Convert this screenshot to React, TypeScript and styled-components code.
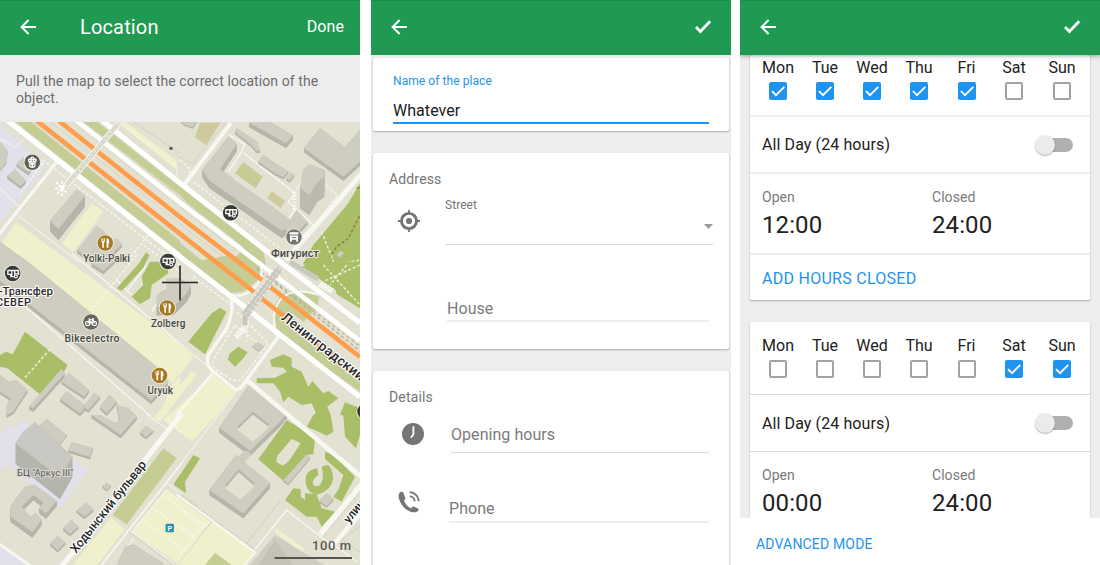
import React from 'react';
import styled, { createGlobalStyle } from 'styled-components';

const GlobalStyle = createGlobalStyle`
  * { box-sizing: border-box; }
  body {
    margin: 0;
    background: #fff;
    font-family: Roboto, "Noto Sans", sans-serif;
    color: #212121;
  }
`;

const Page = styled.div`
  display: flex;
  width: 1100px;
  height: 565px;
  overflow: hidden;
`;

const Screen = styled.section<{ $gap?: number }>`
  display: flex;
  flex-direction: column;
  flex: 0 0 360px;
  height: 565px;
  margin-left: ${(p) => p.$gap ?? 0}px;
  background: #ededed;
  overflow: hidden;
`;

const AppBar = styled.header<{ $raised?: boolean; $right?: number }>`
  display: flex;
  align-items: center;
  flex: 0 0 55px;
  padding: 0 ${(p) => p.$right ?? 19}px 2px 20px;
  background: #209952;
  border-top: 1px solid #1c8c49;
  color: #fff;
  z-index: 1;
  box-shadow: ${(p) => (p.$raised ? '0 1px 4px rgba(0, 0, 0, 0.35)' : 'none')};
`;

const Title = styled.h1`
  flex: 1;
  margin: 0 0 0 44px;
  font-size: 20px;
  font-weight: 400;
  line-height: 24px;
  letter-spacing: 0.15px;
`;

const Done = styled.span`
  font-size: 16px;
  line-height: 20px;
  letter-spacing: 0.1px;
`;

const Spacer = styled.div`
  flex: 1;
`;

const Hint = styled.p`
  flex: 0 0 67px;
  margin: 0;
  padding: 18px 16px 0;
  font-size: 14px;
  line-height: 16.5px;
  letter-spacing: 0.08px;
  color: #6e6e6e;
`;

const MapView = styled.svg`
  display: block;
  flex: 0 0 443px;
  width: 360px;
`;

const FormBody = styled.div`
  display: flex;
  flex-direction: column;
  gap: 22px;
  padding: 3px 2px 0;
`;

const Card = styled.div<{ $h: number; $shift?: number }>`
  flex: 0 0 ${(p) => p.$h}px;
  margin-top: ${(p) => p.$shift ?? 0}px;
  background: #fff;
  border-radius: 2px;
  box-shadow: 0 1px 2px rgba(0, 0, 0, 0.28);
`;

const NameField = styled.label`
  display: flex;
  flex-direction: column;
  margin: 0 20px;
  padding-top: 15px;
  height: 66px;
  border-bottom: 2px solid #1e93ef;
`;

const NameCaption = styled.span`
  font-size: 12px;
  line-height: 16px;
  letter-spacing: 0.07px;
  color: #1e93ef;
`;

const NameValue = styled.span`
  margin-top: 12px;
  font-size: 16px;
  line-height: 20px;
  letter-spacing: 0.05px;
`;

const SectionTitle = styled.h2`
  margin: 0;
  padding: 18px 16px 0;
  font-size: 14px;
  font-weight: 400;
  line-height: 16px;
  letter-spacing: 0.15px;
  color: #757575;
`;

const FieldRow = styled.div<{ $h: number; $right?: number }>`
  display: flex;
  align-items: flex-start;
  height: ${(p) => p.$h}px;
  padding-right: ${(p) => p.$right ?? 20}px;
`;

const IconSlot = styled.div<{ $w: number; $left: number; $top: number }>`
  flex: 0 0 ${(p) => p.$w}px;
  padding: ${(p) => p.$top}px 0 0 ${(p) => p.$left}px;
  svg { display: block; }
`;

const Field = styled.div<{ $thick?: boolean; $top: number }>`
  flex: 1;
  height: 100%;
  padding-top: ${(p) => p.$top}px;
  border-bottom: ${(p) => (p.$thick ? '2px solid #eeeeee' : '1px solid #d9d9d9')};
  font-size: 16px;
  line-height: 20px;
  letter-spacing: 0.05px;
  color: #7b7b7b;
`;

const SelectCaption = styled.div`
  font-size: 12px;
  line-height: 16px;
  color: #757575;
`;

const SelectArrow = styled.div`
  display: flex;
  justify-content: flex-end;
  padding-top: 11px;
  svg { display: block; }
`;

const HoursBody = styled.div`
  display: flex;
  flex-direction: column;
  flex: 0 0 463px;
  gap: 22px;
  padding: 0 10px;
  overflow: hidden;
`;

const Days = styled.div<{ $h: number }>`
  display: grid;
  grid-template-columns: 47px 47px 47px 47px 48px 47px 49px;
  height: ${(p) => p.$h}px;
  padding: 14px 0 0 4.5px;
`;

const Day = styled.div`
  display: flex;
  flex-direction: column;
  align-items: center;
  gap: 4px;
  font-size: 16px;
  line-height: 20px;
`;

const Box = styled.span<{ $on: boolean }>`
  display: flex;
  width: 18px;
  height: 18px;
  border-radius: 2px;
  border: ${(p) => (p.$on ? 'none' : '2px solid #a2a2a2')};
  background: ${(p) => (p.$on ? '#1e93ef' : '#fff')};
`;

const Rule = styled.div<{ $thick?: boolean }>`
  height: ${(p) => (p.$thick ? 2 : 1)}px;
  background: ${(p) => (p.$thick ? '#eeeeee' : '#dadada')};
`;

const AllDay = styled.div<{ $h: number }>`
  display: flex;
  align-items: center;
  justify-content: space-between;
  height: ${(p) => p.$h}px;
  padding: 0 17px 0 12px;
  font-size: 16px;
  letter-spacing: 0.1px;
`;

const Track = styled.span`
  display: flex;
  align-items: center;
  width: 34px;
  height: 14px;
  background: linear-gradient(to right, transparent 8px, #b0b0b0 8px);
  border-radius: 7px;
`;

const Thumb = styled.span`
  flex: 0 0 20px;
  height: 20px;
  margin-left: -4px;
  border-radius: 50%;
  background: #ebebeb;
  box-shadow: 0 1px 1.5px rgba(0, 0, 0, 0.3);
`;

const Times = styled.div`
  display: grid;
  grid-template-columns: 170px 170px;
  height: 79px;
  padding: 14px 0 0 12px;
`;

const TimeLabel = styled.div`
  font-size: 14px;
  line-height: 18px;
  letter-spacing: 0.05px;
  color: #7a7a7a;
`;

const TimeValue = styled.div`
  margin-top: 5px;
  font-size: 24px;
  line-height: 28px;
  letter-spacing: 0.1px;
`;

const AddHours = styled.div`
  height: 45px;
  padding-left: 12px;
  font-size: 16px;
  line-height: 47px;
  letter-spacing: 0.27px;
  color: #1e93ef;
`;

const Footer = styled.footer`
  flex: 1;
  padding-left: 16px;
  background: #fff;
  font-size: 14px;
  line-height: 53px;
  letter-spacing: 0.17px;
  color: #1e93ef;
`;

const BackIcon = () => (
  <svg width="16" height="16" viewBox="0 0 16 16" fill="none" stroke="#fff" strokeWidth="2">
    <path d="M16 8H1.6M8.6 1L1.6 8l7 7" />
  </svg>
);

const DoneIcon = () => (
  <svg width="18" height="16" viewBox="0 0 18 16" fill="none" stroke="#fff" strokeWidth="2.8">
    <path d="M2 8l4.400 4.400L16.200 2.200" />
  </svg>
);

const TargetIcon = () => (
  <svg width="22" height="22" viewBox="0 0 22 22" fill="none" stroke="#757575">
    <circle cx="11" cy="11" r="7.6" strokeWidth="2.900" />
    <circle cx="11" cy="11" r="3.100" fill="#757575" stroke="none" />
    <path d="M11 0v3M11 19v3M0 11h3M19 11h3" strokeWidth="1.800" />
  </svg>
);

const ClockIcon = () => (
  <svg width="22" height="22" viewBox="0 0 22 22">
    <circle cx="11" cy="11" r="11" fill="#757575" />
    <path d="M11.400 3.300v8.200l-2.600 3.200" fill="none" stroke="#fff" strokeWidth="1.800" />
  </svg>
);

const PhoneIcon = () => (
  <svg width="22" height="22" viewBox="0 0 22 22" fill="none" stroke="#757575">
    <path
      d="M2.400 1.100C0.800 2.300 0.100 4.800 0.900 7.500c2 6.800 6 11.200 12.400 13.400 2.600.8 5.600.6 7.200-1.700.5-.7.4-1.100-.2-1.500l-4.700-2.200c-.6-.2-.9-.1-1.300.4l-1.200 1.500C9.700 15.700 7.300 13 6 9.700L7 8.300c.4-.5.5-.8.3-1.400L5.300 1.600C4.900.7 3.700.2 2.400 1.100z"
      fill="#757575"
      stroke="none"
    />
    <path d="M11.700 1.200a9 9 0 0 1 9 9" strokeWidth="1.900" />
    <path d="M11.700 5.400a5 5 0 0 1 4.900 4.900" strokeWidth="1.900" />
  </svg>
);

const TickIcon = () => (
  <svg width="18" height="18" viewBox="0 0 18 18" fill="none" stroke="#fff" strokeWidth="1.900">
    <path d="M3 9.200l4 4L15.300 4.800" />
  </svg>
);

type P = [number, number];
const parse = (s: string): P[] => s.split(' ').map((p) => p.split(',').map(Number) as P);
const shifted = (s: string, dy: number) => parse(s).map(([x, y]) => `${x},${y + dy}`).join(' ');

/* Extruded footprint: one wall per edge under a flat roof, with optional courtyard. */
const Building = ({ pts, h = 8, roof = '#cecdc0', wall = '#b6b5a9', hole }: {
  pts: string; h?: number; roof?: string; wall?: string; hole?: string;
}) => {
  const list = parse(pts);
  return (
    <g>
      <polygon points={shifted(pts, h)} fill={wall} />
      {list.map(([x, y], i) => {
        const [u, v] = list[(i + 1) % list.length];
        return <polygon key={i} points={`${x},${y} ${u},${v} ${u},${v + h} ${x},${y + h}`} fill={wall} />;
      })}
      <polygon points={pts} fill={roof} />
      {hole && <polygon points={hole} fill={wall} />}
      {hole && <polygon points={shifted(hole, h * 0.5 + 1)} fill="#e3e1d2" />}
    </g>
  );
};

const Area = ({ pts, c = '#a9be66' }: { pts: string; c?: string }) => <polygon points={pts} fill={c} />;
const Way = ({ d, w = 5, c = '#f8f8f3', dash }: { d: string; w?: number; c?: string; dash?: string }) => (
  <path d={d} fill="none" stroke={c} strokeWidth={w} strokeDasharray={dash} strokeLinejoin="round" />
);

/* A map tile is drawn in thirds of a pixel from its own corner. */
const Tile = ({ x, y, children }: { x: number; y: number; children: React.ReactNode }) => (
  <g transform={`translate(${x} ${y}) scale(0.33333)`}>{children}</g>
);

const YELLOW = '#f1f0cc';
const PALE = '#c5cd94';
const LILAC = '#e2e0ea';
const ORANGE = '#ff9d4a';

const Label = ({ x, y, len, size = 10.5, halo = '#e9e8dc', color = '#474744', rotate, weight = 500, children }: {
  x: number; y: number; len?: number; size?: number; halo?: string; color?: string; rotate?: number; weight?: number; children: string;
}) => (
  <text
    x={x}
    y={y}
    textLength={len}
    fontSize={size}
    fontWeight={weight}
    fill={color}
    stroke={halo}
    strokeWidth={2.2}
    strokeLinejoin="round"
    paintOrder="stroke"
    transform={rotate ? `rotate(${rotate} ${x} ${y})` : undefined}
  >
    {children}
  </text>
);

const Pin = ({ x, y, c, children }: { x: number; y: number; c: string; children?: React.ReactNode }) => (
  <g transform={`translate(${x} ${y})`}>
    <circle r="8.600" fill="#f6f5ee" />
    <circle r="7.800" fill={c} />
    {children}
  </g>
);

const Cutlery = () => (
  <g fill="#fff">
    <path d="M-4-4.800h.8v3h.6v-3h.8v3h.6v-3h.8v3.400l-1 1.400v4.800h-1.600v-4.800l-1-1.400z" />
    <path d="M1.300-4.800c1.900 0 2.600 1.500 2.600 4v1.300h-.8v4.300H1.300z" />
  </g>
);

const Bus = () => (
  <g>
    <path d="M-4.500-3.800H5.200q1.300 0 1.300 1.300V1.500H5.500a2.600 2.600 0 0 0-4.500 2.300H-2.500V1.500H-5.500V-2.800q0-1 1-1z" fill="#fff" />
    <path d="M-4.200-2.200h2.700v2.400h-2.700zM-.3-2.200h1.700v4.800h-1.700zM2.700-2.200h2.300v2h-2.300z" fill="#383a36" />
    <circle cx="3.200" cy="2.900" r="1.500" fill="#383a36" stroke="#fff" strokeWidth="1.100" />
  </g>
);

const CityMap = () => (
  <MapView viewBox="0 122 360 443" width="360" height="443">
    <rect y="122" width="360" height="443" fill="#e3e1d2" />

    <Tile x={0} y={120}>
      <Area c={LILAC} pts="0,10 25,40 135,128 130,150 0,310" />
      <Building h={4} pts="0,65 23,92 19,128 0,150" />
      <Building pts="22,168 45,148 78,182 62,198" />
      <Building pts="50,132 68,112 100,138 85,158" />
      <Area c={PALE} pts="45,5 92,5 540,362 540,398 480,350" />
      <Area c={PALE} pts="250,5 290,5 540,200 540,225" />
      <Way w={2} c="#c4c2ac" dash="3 3" d="M150 5L540 310M214 5L540 262M100 5L540 352" />
      <Way w={2} c="#b8c096" dash="3 3" d="M248 5L540 228M292 5L540 196" />
      <Way w={3} d="M0 205L64 268M52 285L240 428M0 55L45 82L70 60" />
      <Way w={10} c="#f6f6f3" d="M172 124L-5 345" />
      <Way w={4} dash="9 6" d="M128 120L540 436M130 128L60 220" />
      <Area c={YELLOW} pts="355,8 380,8 530,122 530,150" />
      <Way w={2} d="M365 14L530 138V185" />
      <Way w={2} c="#b1b09f" dash="3 3" d="M405 8L540 100" />
      <circle cx="513" cy="85" r="5" fill="#555" />
      <Building h={32} pts="150,302 230,208 255,228 175,328" />
      <Area c={YELLOW} pts="275,250 310,275 220,395 185,372" />
      <Building h={10} pts="290,318 340,358 352,356 365,372 300,440 232,390" />
      <Way w={4} dash="9 6" d="M445 345L385 420M430 375L540 455" />
    </Tile>

    <Area c={YELLOW} pts="16,222 180,344 193,357 180,374 172,382 32,265 2,243" />
    <Building h={4} pts="0,242 32,265 168,376 168,383 151,400 0,281" />

    <Tile x={180} y={120}>
      <Area c="#cfca9d" pts="60,8 122,8 78,76 45,52" />
      <Building h={4} pts="0,0 50,5 38,22 10,12" />
      <Way w={2} c="#b1b09f" dash="3 3" d="M0 112L38 132L88 65L138 8" />
      <Way w={12} d="M152 10L14 192" />
      <Area c={PALE} pts="0,200 250,395 260,450 190,450 0,225" />
      <Area c={PALE} pts="0,368 100,450 85,470 0,400" />
      <Area c="#e3e1d2" pts="0,232 190,380 150,440 0,310" />
      <Way w={2} c="#b9b89f" dash="3 3" d="M0 235L230 410M0 262L170 392M0 312L180 452M0 350L130 450" />
      <Way w={4} dash="9 6" d="M40 185L300 385M0 120L32 150L25 172" />
      <Way w={4} d="M148 45L195 73L182 100L145 155M190 98L345 220L325 245L400 315L345 372M165 180L322 302L345 270" />
      <Building h={22} pts="145,50 170,72 120,148 345,310 305,332 88,182 67,150" />
      <Area c={PALE} pts="190,125 248,170 227,205 165,160" />
      <Area c="#cfca9d" pts="275,213 316,243 303,265 262,235" />
      <Way w={13} dash="5 5" d="M343 215V272" />
      <Building h={6} pts="170,25 232,66 240,92 228,92 215,76 165,36" />
      <Building h={14} pts="208,8 275,8 338,46 318,70" />
      <Building h={6} pts="250,105 285,130 325,154 310,172 285,160 235,125" />
      <Building h={6} pts="333,157 343,165 328,182 318,174" />
      <Building h={12} pts="420,25 495,82 540,30 540,125 490,170 372,85" />
      <Way w={3} d="M435 190L478 232M345 215L368 180" />
      <Building h={60} pts="370,150 388,133 412,142 434,150 432,172 412,185 388,225 360,205" wall="#bbbaae" />
      <Building h={10} pts="350,270 382,305 340,350 315,330" />
      <Area pts="540,190 540,560 365,440 400,375 505,250" />
      <Way w={4} dash="9 6" d="M470 230L385 340" />
      <Way w={4} dash="9 6" c="#f1f4df" d="M425 335L470 450M365 436H450L540 420" />
      <Way w={4} dash="9 6" c="#8a7a45" d="M530 205L545 200M545 275L505 355L470 380L450 410" />
      <Building h={3} pts="482,392 492,400 478,412 470,404" />
      <Way w={16} d="M545 162L318 420" />
      <Way w={3} c="#dddccf" dash="7 5" d="M545 172L330 418" />
    </Tile>

    <Tile x={180} y={265}>
      <Area c={PALE} pts="20,-5 112,62 150,84 190,80 235,45 245,10 230,-10 150,-30" />
      <Area c={PALE} pts="300,92 345,72 418,95 410,135 380,175 540,320 540,380 440,310 290,195 280,130" />
      <Area c="#e3e1d2" pts="330,150 540,330 540,200 400,90" />
      <Area c={PALE} pts="300,92 345,72 418,95 410,130 370,170 330,140 310,170" />
      <Area pts="370,-10 540,-10 540,130 470,88 462,52 400,30" />
      <Way w={4} dash="9 6" c="#f1f4df" d="M430 0L540 120M540 0L430 50M500 0L450 60" />
      <Way w={4} dash="10 8" c="#b5b39b" d="M262 20L540 226M285 50L540 244M230 10L540 258" />
      <Building h={3} pts="232,230 250,243 235,257 218,243" />
      <Area pts="25,230 95,145 120,128 140,140 75,268" />
      <Area pts="150,265 175,245 203,262 190,280 165,305 143,283" />
      <Way w={4} dash="9 6" d="M40 35L160 125L135 215M170 140L265 235L190 335Q175 352 155 345L105 312Q92 295 108 272L165 180L235 235M205 150L200 230" />
      <Way w={10} d="M150 90Q165 130 140 190L85 270Q75 290 95 315L160 370Q172 380 185 365L296 214" />
      <Way w={6} d="M292 215Q268 150 300 105Q335 65 410 88" />
      <Way w={7} d="M150 92Q210 100 240 45Q250 20 240 -10" />
      <Area c={YELLOW} pts="0,243 40,275 0,330" />
      <Area c={YELLOW} pts="35,318 50,330 -60,470 -80,460" />
      <Area c={YELLOW} pts="100,330 165,380 100,462 35,530 -50,465" />
      <Way w={3} d="M0 235L95 315" />
      <Way w={8} d="M98 325L-10 450" />
      <Way w={3} d="M170 378L0 600" />
      <Area pts="270,285 310,268 335,280 335,305 365,320 385,365 397,348 430,385 445,378 475,400 435,430 440,470 410,450 395,415 365,420 325,395 310,412 300,380 280,355 230,355 230,340 285,338 320,320 310,308 275,305" />
      <Area pts="495,412 540,432 540,460 480,450" />
    </Tile>

    {/* The avenue and its carriageways */}
    <g fill="none">
      <path d="M7 120L183 259L360 397" stroke="#fff" strokeWidth="5.200" />
      <path d="M77 121L180 202.500L360 341" stroke="#fff" strokeWidth="4.600" />
      <path d="M99 118L180 183L283 264L360 323" stroke="#fff" strokeWidth="5" />
      <path d="M37 121L254 292M261 298L360 376" stroke={ORANGE} strokeWidth="4.600" />
      <path d="M59 121L180 217L262 280M269 286L360 357" stroke={ORANGE} strokeWidth="4.600" />
      <path d="M65 187L118 124" stroke="#f7f7f2" strokeWidth="6" />
      <path d="M65 187L118 124" stroke="#d4d4c8" strokeWidth="4" />
      <path d="M65 187L118 124" stroke="#edede4" strokeWidth="1.200" strokeDasharray="3 2" />
      <path d="M56 182l11 11M55 189l12-4M57 194l8-9M62 181v15" stroke="#fff" strokeWidth="1.600" strokeDasharray="3 1" />
      <path d="M280 268L245 315" stroke="#c9c8be" strokeWidth="8" />
      <path d="M245 315v10M290 262l28 17" stroke="#c9c8be" strokeWidth="5" />
      <path d="M283 270L249 314M277 266L243 311" stroke="#fff" strokeWidth="1" strokeDasharray="3 2" />
      <path d="M280 268L245 315" stroke="#efefe9" strokeWidth="1" strokeDasharray="3 2" />
      <path d="M236 337l9-10M320 284l12 7" stroke="#fff" strokeWidth="6" strokeDasharray="1.500 1" />
    </g>

    <Tile x={0} y={265}>
      <Building h={10} pts="280,-12 300,-18 345,-15 310,18 275,-5" />
      <Way w={4} d="M60 110L450 452M215 -35L540 235" />
      <Way w={4} d="M440 0L380 80M500 65L455 140M395 90L350 45" />
      <Way w={4} dash="9 6" d="M410 -30L275 135" />
      <Area pts="350,70 415,-2 438,-38 448,-30 430,8 365,78" />
      <Area pts="395,95 430,60 425,35 450,-10 500,-10 505,25 455,60 450,100 420,117" />
      <Building h={26} pts="500,42 540,40 572,62 560,85 520,125 470,125 470,90 500,70" />
      <Area pts="75,200 203,300 195,315 120,388 22,310 0,305 0,270 18,260 38,268" />
      <Way w={5} c="#e6ebc9" dash="9 6" d="M75 338L168 232" />
      <Building h={10} pts="183,312 195,325 100,430 88,424" />
      <Building h={8} pts="0,330 28,352 48,345 82,375 40,440 20,450 20,420 32,400 0,380" />
      <Building h={8} pts="207,323 267,375 253,395 185,350" />
      <Building h={8} pts="200,380 260,425 240,445 180,402" />
      <Building h={8} pts="283,383 300,395 265,435 250,425" />
      <Building h={8} pts="328,390 350,410 320,445 300,425" />
      <Area c={YELLOW} pts="520,350 540,335 540,380 500,450 480,450" />
    </Tile>

    <Tile x={0} y={415}>
      <Area c={LILAC} pts="0,60 25,30 45,40 70,15 120,60 265,165 185,275 120,230 30,150 0,160" />
      <Building h={4} pts="115,35 140,12 200,60 175,95" />
      <Building h={62} pts="47,85 70,50 105,22 217,125 180,190" roof="#c9c8c2" wall="#b5b4ad" />
      <Building h={7} pts="215,82 278,100 270,126 205,106" />
      <Building h={16} pts="30,275 75,215 105,210 170,258 138,295 118,280 130,262 100,240 65,275 90,305 108,295 125,315 97,352 32,305" />
      <Building h={10} pts="275,0 300,0 345,25 360,15 350,-30 385,-20 410,5 362,60" />
      <Building h={7} pts="258,263 280,283 253,305 230,287" />
      <Building h={7} pts="213,316 235,335 210,357 190,340" />
      <Building h={7} pts="173,363 196,382 173,405 150,385" />
      <Building h={7} pts="437,33 460,47 438,66 420,52" />
      <Building h={4} pts="320,203 333,213 320,225 307,214" />
      <Area c={LILAC} pts="0,395 90,450 0,450" />
      <Way w={9} d="M-5 385L95 455" />
      <Way w={3} d="M440 0L500 40M540 50L500 10" />
      <Area c={PALE} pts="490,100 530,130 380,328 338,300" />
      <Area c={YELLOW} pts="333,307 375,343 292,450 218,450" />
      <Way w={16} d="M545 -5L182 458" />
      <Way w={5} d="M545 145L300 455M500 205L545 240" />
      <Area c={YELLOW} pts="500,222 630,320 540,450 510,430 395,350" />
      <Way w={2} c="#b1b09f" dash="3 3" d="M500 207L590 270M385 350L520 450" />
      <Way w={3} d="M490 240L620 335M460 280L590 375M430 315L560 410M500 225L395 350L520 445" />
      <Way w={4} dash="9 6" d="M400 372L350 450" />
      <Building h={6} pts="375,395 400,388 490,445 490,470 340,470" wall="#c2c1b3" />
      <Area pts="540,180 522,205 540,222" />
    </Tile>

    <Tile x={180} y={415}>
      <Area pts="40,120 60,130 15,200 18,235 -18,210 0,180" />
      <Building h={15} pts="210,-95 320,-5 300,20 210,108 118,38" hole="218,-10 268,28 218,72 172,36" />
      <Area c="#cecdc0" pts="195,105 215,118 190,145 165,135" />
      <Building h={15} pts="168,120 270,205 190,295 88,225" hole="176,163 224,205 182,246 136,211" />
      <path fillRule="evenodd" fill="#a9be66" d="M320 15L368 45L405 75L400 118L380 120L352 150L330 195L310 197L235 133ZM335 72L362 85L325 140L308 152L288 140L292 122Z" />
      <Building h={5} pts="380,118 390,128 325,206 310,196" />
      <Area pts="380,35 400,0 440,-30 452,0 460,50 440,62 415,50" />
      <Area pts="490,0 500,-35 545,-20 540,60 528,100 495,65" />
      <path fill="#a9be66" d="M412 160Q372 165 377 205Q385 240 415 238Q455 225 460 190Q455 150 440 150L425 155Q435 190 420 210Q405 220 398 205Q398 190 415 180Z" />
      <Area pts="435,110 460,120 525,185 485,260 460,245 475,225 490,180 435,132" />
      <Area pts="340,220 362,222 362,245 375,255 375,235 410,238 425,280 465,290 425,335 410,305 380,305 315,255" />
      <Building h={5} pts="440,235 460,252 440,273 418,258" />
      <Way w={14} d="M200 -105L545 186" />
      <Way w={16} d="M545 208L420 358" />
      <Way w={4} c="#d9d7c8" dash="9 6" d="M545 225L430 365" />
      <Way w={14} d="M545 290L455 395" />
      <Way w={4} d="M460 395L320 285L215 415M450 380L530 440" />
      <Way w={2} c="#b1b09f" dash="3 3" d="M300 258L200 385M545 330L485 375L540 410" />
      <Area c={YELLOW} pts="100,318 225,410 195,450 0,450 0,435" />
      <Way w={3} d="M0 330L45 365M0 285L65 335L0 420M55 345L100 315L-10 240" />
      <Way w={6} d="M-10 238L225 412L190 455" />
      <Way w={2} c="#b1b09f" dash="3 3" d="M-10 232L225 404M95 320L0 440" />
      <Area c={YELLOW} pts="290,340 375,402 365,414 285,352" />
      <Area c={PALE} pts="105,413 155,450 75,450" />
      <Area c="#cecdc0" pts="285,360 440,455 205,455" />
      <Area c="#c3c2b5" pts="285,375 340,450 235,450" />
    </Tile>

    <Label x={83} y={262} len={47}>Yolki-Palki</Label>
    <Label x={271} y={257} len={48} size={11.5}>Фигурист</Label>
    <Label x={-1} y={294.5} len={54} size={11.5} halo="#fff" color="#2a2a2a">-Трансфер</Label>
    <Label x={-4} y={305.5} len={35} size={11} halo="#fff" color="#2a2a2a">СЕВЕР</Label>
    <Label x={64.5} y={342} len={55}>Bikeelectro</Label>
    <Label x={151} y={327} len={34.5} size={10}>Zolberg</Label>
    <Label x={147.5} y={394} len={25.5} size={10}>Uryuk</Label>
    <Label x={17} y={475.5} len={56} size={9.5} weight={400} halo="#d5d4cf" color="#55554f">БЦ "Аркус III"</Label>
    <Label x={76} y={554} len={114} size={12.5} rotate={-51.5} halo="#fff" color="#2a2a2a">Ходынский бульвар</Label>
    <Label x={280.5} y={319} len={101} size={13.5} rotate={38} halo="#fff" color="#2a2a2a">Ленинградский</Label>
    <Label x={349} y={524} size={12} rotate={-51} halo="#fff" color="#2a2a2a">улица</Label>

    <Pin x={32.3} y={162.3} c="#5f5f57">
      <g fill="none" stroke="#fff" strokeWidth="1.400">
        <circle cx="0" cy="-3.900" r="1.300" /><circle cx="-2.500" cy="-2" r="1.300" /><circle cx="2.500" cy="-2" r="1.300" />
        <circle cx="-1.600" cy=".7" r="1.300" /><circle cx="1.600" cy=".7" r="1.300" />
        <path d="M0 1.500V5.500M-3.200 2.800Q-2 5 0 5Q2 5 3.200 2.800" />
      </g>
    </Pin>
    <Pin x={105.3} y={243} c="#a67a22"><Cutlery /></Pin>
    <Pin x={167.3} y={308} c="#a67a22"><Cutlery /></Pin>
    <Pin x={159.5} y={375.5} c="#a67a22"><Cutlery /></Pin>
    <Pin x={168} y={261.5} c="#383a36"><Bus /></Pin>
    <Pin x={230.7} y={212.7} c="#383a36"><Bus /></Pin>
    <Pin x={12.7} y={273.5} c="#383a36"><Bus /></Pin>
    <Pin x={365} y={411.5} c="#383a36" />
    <Pin x={294} y={237} c="#76766c">
      <path d="M-4.500-4.800h9v2.300h-9zM-4-1.500h8v6.300H2.300V2.800h-4.600v2H-4z" fill="#fff" />
      <path d="M-2.300.6h4.600" stroke="#76766c" />
    </Pin>
    <Pin x={91} y={322} c="#66665d">
      <g fill="none" stroke="#fff" strokeWidth="1.100">
        <circle cx="-3.400" cy="1.500" r="2.100" /><circle cx="3.400" cy="1.500" r="2.100" />
        <path d="M-3.400 1.500L-1.500-2.200H1.800L0 1.500L-1.500-1.800M3.400 1.500L1.800-3.500H3M-2.500-3h1.800" />
      </g>
    </Pin>
    <rect x="165.500" y="523.800" width="8.400" height="8.400" rx="1" fill="#2a8ebb" />
    <text x="167.500" y="530.600" fontSize="7" fontWeight="700" fill="#fff">P</text>

    <path d="M180 265.500v35M162 282.500h36" stroke="#262626" strokeWidth="1.600" fill="none" />
    <text x="312" y="550" textLength="39" fontSize="13" fontWeight="500" fill="#5a5a54">100 m</text>
    <path d="M274.500 558H352" stroke="#55554f" strokeWidth="1.800" />
  </MapView>
);

const NAMES = ['Mon', 'Tue', 'Wed', 'Thu', 'Fri', 'Sat', 'Sun'];

const DayPicker = ({ from, to, height }: { from: number; to: number; height: number }) => (
  <Days $h={height}>
    {NAMES.map((name, i) => {
      const on = i >= from && i <= to;
      return (
        <Day key={name}>
          {name}
          <Box $on={on}>{on && <TickIcon />}</Box>
        </Day>
      );
    })}
  </Days>
);

const Schedule = ({ open, closed }: { open: string; closed: string }) => (
  <Times>
    <div>
      <TimeLabel>Open</TimeLabel>
      <TimeValue>{open}</TimeValue>
    </div>
    <div>
      <TimeLabel>Closed</TimeLabel>
      <TimeValue>{closed}</TimeValue>
    </div>
  </Times>
);

const AllDayRow = ({ height }: { height: number }) => (
  <AllDay $h={height}>
    All Day (24 hours)
    <Track><Thumb /></Track>
  </AllDay>
);

export default function App() {
  return (
    <Page>
      <GlobalStyle />
      <Screen>
        <AppBar $right={16}>
          <BackIcon />
          <Title>Location</Title>
          <Done>Done</Done>
        </AppBar>
        <Hint>Pull the map to select the correct location of the object.</Hint>
        <CityMap />
      </Screen>

      <Screen $gap={11}>
        <AppBar>
          <BackIcon />
          <Spacer />
          <DoneIcon />
        </AppBar>
        <FormBody>
          <Card $h={73}>
            <NameField>
              <NameCaption>Name of the place</NameCaption>
              <NameValue>Whatever</NameValue>
            </NameField>
          </Card>
          <Card $h={196}>
            <SectionTitle>Address</SectionTitle>
            <FieldRow $h={58} $right={16}>
              <IconSlot $w={72} $left={25} $top={22.5}><TargetIcon /></IconSlot>
              <Field $top={10}>
                <SelectCaption>Street</SelectCaption>
                <SelectArrow>
                  <svg width="9" height="5" viewBox="0 0 9 5"><path d="M0 0h9L4.500 5z" fill="#9b9b9b" /></svg>
                </SelectArrow>
              </Field>
            </FieldRow>
            <FieldRow $h={77}>
              <IconSlot $w={74} $left={0} $top={0} />
              <Field $thick $top={54}>House</Field>
            </FieldRow>
          </Card>
          <Card $h={220}>
            <SectionTitle>Details</SectionTitle>
            <FieldRow $h={48}>
              <IconSlot $w={78} $left={29} $top={18}><ClockIcon /></IconSlot>
              <Field $top={20}>Opening hours</Field>
            </FieldRow>
            <FieldRow $h={70}>
              <IconSlot $w={76} $left={25} $top={38}><PhoneIcon /></IconSlot>
              <Field $thick $top={46}>Phone</Field>
            </FieldRow>
          </Card>
        </FormBody>
      </Screen>

      <Screen $gap={9}>
        <AppBar $raised>
          <BackIcon />
          <Spacer />
          <DoneIcon />
        </AppBar>
        <HoursBody>
          <Card $h={256} $shift={-11}>
            <DayPicker from={0} to={4} height={71} />
            <Rule $thick />
            <AllDayRow height={55} />
            <Rule $thick />
            <Schedule open="12:00" closed="24:00" />
            <Rule $thick />
            <AddHours>ADD HOURS CLOSED</AddHours>
          </Card>
          <Card $h={257}>
            <DayPicker from={5} to={6} height={72} />
            <Rule />
            <AllDayRow height={56} />
            <Rule />
            <Schedule open="00:00" closed="24:00" />
          </Card>
        </HoursBody>
        <Footer>ADVANCED MODE</Footer>
      </Screen>
    </Page>
  );
}
